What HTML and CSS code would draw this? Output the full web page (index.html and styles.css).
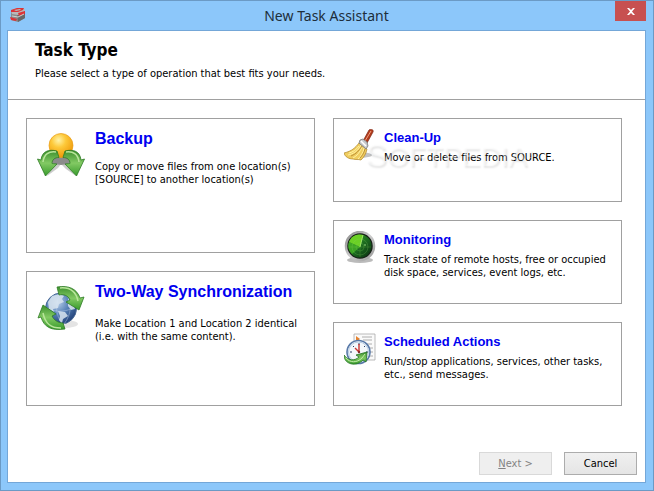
FILE: index.html
```
<!DOCTYPE html>
<html lang="en">
<head>
<meta charset="utf-8">
<title>New Task Assistant</title>
<link rel="stylesheet" href="styles.css">
</head>
<body>
<div class="window">
  <header class="titlebar">
    <svg class="app-icon" viewBox="0 0 16 16" aria-hidden="true">
      <path d="M1 5l6 2 8-2v6l-7 4-7-2z" fill="#8b8b8b"/>
      <path d="M7 6l8-2v7l-7 4z" fill="#686868"/>
      <path d="M1 3l6-2 8 1-1 4-6 2-6-1z" fill="#b9b9b9"/>
      <path d="M1 3l6-2 7 0-1 2-5 2-7 0z" fill="#dc3337"/>
      <path d="M4 3l6-1 1 1-5 1z" fill="#b9b9b9"/>
      <path d="M8 6l7-2v3l-6 2zM0 10l7 2-1 2-5-1z" fill="#dc3337"/>
      <path d="M2 9l6 1 6-3" fill="none" stroke="#d0d0d0"/>
    </svg>
    <h1 class="window-title">New Task Assistant</h1>
    <button class="close" type="button" aria-label="Close">
      <svg class="close-icon" viewBox="0 0 8 7" aria-hidden="true"><path d="M0 0h2l2 2 2-2h2L5 3.500 8 7H6L4 5 2 7H0l3-3.500z" fill="#fff"/></svg>
    </button>
  </header>
  <main class="client">
    <div class="intro">
      <h2 class="page-title">Task Type</h2>
      <p class="page-text">Please select a type of operation that best fits your needs.</p>
    </div>
    <div class="tasks">
      <div class="column">
        <button class="card large" type="button">
          <svg class="icon" viewBox="0 0 48 48" aria-hidden="true">
            <defs>
              <radialGradient id="ball" cx=".4" cy=".28" r=".75"><stop offset="0" stop-color="#fff3a8"/><stop offset=".4" stop-color="#fdc93a"/><stop offset="1" stop-color="#ee9606"/></radialGradient>
              <linearGradient id="green" x1="0" y1="0" x2="0" y2="1"><stop offset="0" stop-color="#3c8f2d"/><stop offset=".5" stop-color="#82c963"/><stop offset="1" stop-color="#379a2b"/></linearGradient>
            </defs>
            <ellipse cx="24" cy="27" rx="11" ry="5" fill="#777" opacity=".85"/>
            <path d="M10 43l11-8 3-4 5 5 10 7-8-12H17z" fill="#999" opacity=".5"/>
            <circle cx="24" cy="12.500" r="12" fill="url(#ball)" stroke="#e99e18" stroke-width=".7"/>
            <path d="M20 18C12 16 5 18 4 27L.500 26 8.500 43 20 31l-5-.500c0-4 3-6 7-6z" fill="url(#green)" stroke="#2d7b25" stroke-width=".8"/>
            <path d="M28 18c8-2 15 0 16 9l3.500-1-8 17L28 31l5-.500c0-4-3-6-7-6z" fill="url(#green)" stroke="#2d7b25" stroke-width=".8"/>
            <path d="M19 19c-7-1-12 2-13 10M29 19c7-1 12 2 13 10" fill="none" stroke="#b8e59a" stroke-width="1.500"/>
          </svg>
          <span class="copy"><span class="name">Backup</span><span class="detail">Copy or move files from one location(s)<br>[SOURCE] to another location(s)</span></span>
        </button>
        <button class="card large sync" type="button">
          <svg class="icon" viewBox="0 0 48 48" aria-hidden="true">
            <defs><radialGradient id="globe" cx=".38" cy=".3" r=".75"><stop offset="0" stop-color="#bed3ed"/><stop offset=".5" stop-color="#5680b6"/><stop offset="1" stop-color="#203f76"/></radialGradient></defs>
            <ellipse cx="27" cy="38" rx="14" ry="4" fill="#bbb" opacity=".4"/>
            <circle cx="24" cy="22.500" r="15.500" fill="url(#globe)" stroke="#496995"/>
            <path d="M11 16l4-6 8-2 4 2-2 3 2 3-5 2-1 4-5 1 1 3-5-3zM21 25l7 1 3 4-5 3-1 4-3-3 1-4zM31 13l5 3 2 7-4 1-3-4z" fill="#d8e4ee" opacity=".85"/>
            <path d="M10 22c9 5 21 4 29-2M24 7c-6 9-6 21 1 31M29 8c6 8 6 20-2 30" fill="none" stroke="#d6e6f6" stroke-width=".7" opacity=".5"/>
            <path d="M20 1c12-2 20 2 23 11l4-1-5 13-13-8 4-2c-2-5-7-6-11-5z" fill="url(#green)" stroke="#2d7b25" stroke-width=".8"/>
            <path d="M28 43C14 45 7 41 4 31l-3 1 5-13 13 9-4 2c2 4 6 7 11 7z" fill="url(#green)" stroke="#2d7b25" stroke-width=".8"/>
            <path d="M23 2c10-1 16 4 18 13M24 42C13 42 8 37 6 27" fill="none" stroke="#b8e59a" stroke-width="1.500"/>
          </svg>
          <span class="copy"><span class="name">Two-Way Synchronization</span><span class="detail">Make Location 1 and Location 2 identical<br>(i.e. with the same content).</span></span>
        </button>
      </div>
      <div class="column">
        <button class="card" type="button">
          <svg class="icon" viewBox="0 0 32 32" aria-hidden="true">
            <ellipse cx="15" cy="26" rx="13" ry="3" fill="#999" opacity=".6"/>
            <path d="M25 1c2-2 5 0 4 2l-6 11-4-2z" fill="#b33b1c" stroke="#7b2a18" stroke-width=".7"/>
            <path d="M27 2l-6 10" stroke="#f0a080" stroke-width="1"/>
            <path d="M15 14l8 6c-1 5-3 8-6 11-3-1-5 0-8-1-4 0-8-2-9-6 8-2 11-5 15-10z" fill="#f0cd60" stroke="#ad8427" stroke-width=".7"/>
            <path d="M17 16C14 22 9 25 4 26M18 18c-2 5-5 9-9 11M20 19c-1 5-3 8-6 11M15 17c-3 4-6 6-10 7" fill="none" stroke="#fff1a0"/>
            <path d="M18 17c-3 5-6 8-11 10M21 20c-1 4-3 7-5 9" fill="none" stroke="#a77a25" stroke-width=".7"/>
            <path d="M16 11l3-1 4 3 1 4-2 3-7-6z" fill="#c6c9cc" stroke="#777" stroke-width=".8"/>
            <path d="M17 12l5 5" stroke="#fff" stroke-width="1.500"/>
          </svg>
          <span class="copy"><span class="name">Clean-Up</span><span class="detail">Move or delete files from SOURCE.</span></span>
          <span class="watermark" aria-hidden="true"><span class="initial">S</span>OFTPEDIA<span class="mark">®</span></span>
        </button>
        <button class="card" type="button">
          <svg class="icon" viewBox="0 0 32 32" aria-hidden="true">
            <defs>
              <linearGradient id="radar" x1="0" y1="0" x2="1" y2="1"><stop offset="0" stop-color="#3ca526"/><stop offset=".5" stop-color="#1d6e20"/><stop offset="1" stop-color="#082b10"/></linearGradient>
              <linearGradient id="metal" x1="0" y1="0" x2="1" y2="1"><stop offset="0" stop-color="#888"/><stop offset=".5" stop-color="#ccc"/><stop offset="1" stop-color="#999"/></linearGradient>
            </defs>
            <ellipse cx="16" cy="29" rx="13" ry="3" fill="#bbb"/>
            <circle cx="16" cy="15" r="14" fill="#182018" stroke="url(#metal)" stroke-width="2.500"/>
            <circle cx="16" cy="15" r="11.500" fill="url(#radar)"/>
            <path d="M16 16L5 11C7 5 13 2 19 4z" fill="#6bd025"/>
            <path d="M16 16L5 11c-2 5 0 9 3 12z" fill="#42ae26" opacity=".8"/>
            <circle cx="16" cy="16" r="8" fill="none" stroke="#84d661" stroke-width=".6" opacity=".4"/>
            <circle cx="16" cy="16" r="4" fill="none" stroke="#84d661" stroke-width=".6" opacity=".35"/>
            <path d="M16 16L19 4" stroke="#baf57e" stroke-width=".8"/>
            <path d="M5 16h22M16 16v10" stroke="#a5f066" stroke-width=".5" opacity=".3"/>
            <circle cx="21" cy="14" r=".8" fill="#a4e68b"/>
          </svg>
          <span class="copy"><span class="name">Monitoring</span><span class="detail">Track state of remote hosts, free or occupied<br>disk space, services, event logs, etc.</span></span>
        </button>
        <button class="card" type="button">
          <svg class="icon" viewBox="0 0 32 32" aria-hidden="true">
            <path d="M10 1h21v26H10z" fill="#fafafa" stroke="#aaa" stroke-width=".8"/>
            <path d="M18 4h10M19 7h9M21 11h7M25 15h4M26 19h3M26 23h3" stroke="#999" stroke-width=".8"/>
            <path d="M12 3l4 3-4 3z" fill="#e8832c"/>
            <circle cx="14.500" cy="19" r="11.500" fill="#f3f7fb" stroke="#5879a8" stroke-width="1.600"/>
            <circle cx="14.500" cy="19" r="10" fill="none" stroke="#b5cbe2"/>
            <path d="M15 10v2M6 19h2M22 19h2M9 13l1 1M21 13l-1 1" stroke="#283d64"/>
            <path d="M15 19V11M15 19l-4-4" stroke="#c83532" stroke-width="1.400"/>
            <circle cx="15" cy="19" r="1.200" fill="#842c2c"/>
            <path d="M0 22c0 10 13 12 19 5l3 2 1-10-11 3 3 2c-4 4-11 4-15-2z" fill="url(#green)" stroke="#237325" stroke-width=".8"/>
            <path d="M2 25c4 5 11 5 16 0l3-4" fill="none" stroke="#c2edaa"/>
          </svg>
          <span class="copy"><span class="name">Scheduled Actions</span><span class="detail">Run/stop applications, services, other tasks,<br>etc., send messages.</span></span>
        </button>
      </div>
    </div>
    <footer class="actions">
      <button class="action" type="button" disabled><span class="key">N</span>ext &gt;</button>
      <button class="action" type="button">Cancel</button>
    </footer>
  </main>
</div>
</body>
</html>
```
FILE: styles.css
```
* { box-sizing: border-box; }
body {
  margin: 0;
  color: #000;
  font: 11px/13px "DejaVu Sans Condensed", Tahoma, sans-serif;
}
h1, h2, p { margin: 0; }
button { font: inherit; color: inherit; }
.window {
  display: flex;
  flex-direction: column;
  min-height: 100vh;
  padding: 0 7px 7px 6px;
  background: #8cc7fa;
  border: 1px solid #6b9ac5;
}
.titlebar {
  display: grid;
  grid-template-columns: 48px 1fr 48px;
  height: 29px;
}
.app-icon {
  width: 16px;
  height: 16px;
  margin: 6px 0 0 3px;
}
.window-title {
  color: #1d2e3b;
  font: 14px/29px "Noto Sans", sans-serif;
  text-align: center;
}
.close {
  justify-self: end;
  display: flex;
  align-items: center;
  justify-content: center;
  width: 31px;
  height: 20px;
  padding: 0;
  background: #c75050;
  border: 0;
}
.close-icon { width: 8px; height: 7px; }
.client {
  flex: 1;
  display: flex;
  flex-direction: column;
  background: #fff;
  border: 1px solid #74a7d8;
}
.intro {
  padding: 8px 27px 19px;
  border-bottom: 1px solid #a0a0a0;
}
.page-title { font: bold 17px/22px "DejaVu Sans Condensed", Tahoma, sans-serif; }
.page-text { margin-top: 6px; }
.tasks {
  display: grid;
  grid-template-columns: minmax(0, 1fr) minmax(0, 1fr);
  gap: 18px;
  padding: 18px 23px 0 18px;
}
.column {
  display: flex;
  flex-direction: column;
  gap: 18px;
}
.card {
  position: relative;
  flex: 1;
  display: flex;
  align-items: flex-start;
  gap: 8px;
  min-height: 84px;
  padding: 10px;
  text-align: left;
  background: #fff;
  border: 1px solid #a0a0a0;
}
.card.large {
  gap: 10px;
  min-height: 135px;
  padding: 14px 10px;
}
.icon { flex: none; width: 32px; height: 32px; }
.large .icon { width: 48px; height: 48px; }
.copy { white-space: nowrap; }
.name, .detail { display: block; }
.name {
  color: #0000f0;
  font: bold 13px/18px "Liberation Sans", Arial, sans-serif;
}
.large .name { font-size: 16px; }
.detail { margin-top: 4px; }
.large .copy { margin-top: -3px; }
.large .detail { margin-top: 12px; }
.large.sync .detail { margin-top: 16px; }
.watermark {
  position: absolute;
  left: 32px;
  top: 20px;
  color: rgba(255, 255, 255, .4);
  font: 28px/32px "Liberation Sans", Arial, sans-serif;
  text-shadow: 1px 2px 2px rgba(0, 0, 0, .1);
  white-space: nowrap;
  pointer-events: none;
}
.initial { font-size: 32px; }
.mark { font-size: 10px; vertical-align: top; }
.actions {
  display: flex;
  justify-content: flex-end;
  gap: 12px;
  margin-top: auto;
  padding: 0 8px 7px;
}
.action {
  width: 73px;
  height: 23px;
  padding: 0;
  background: linear-gradient(#f0f0f0, #e5e5e5);
  border: 1px solid #acacac;
}
.action:disabled {
  color: #838383;
  background: #efefef;
  border-color: #d9d9d9;
}
.key { text-decoration: underline; }
```
